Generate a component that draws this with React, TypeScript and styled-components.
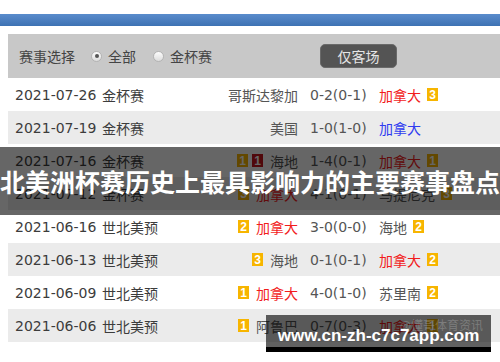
import React from "react";
import styled, { createGlobalStyle } from "styled-components";

type Tone = "red" | "blue" | "plain";
type Card = { n: number; red?: boolean };

interface Match {
  date: string;
  comp: string;
  home: string;
  homeTone: Tone;
  homeCards: Card[];
  score: string;
  away: string;
  awayTone: Tone;
  awayCards: Card[];
}

const matches: Match[] = [
  { date: "2021-07-26", comp: "金杯赛", home: "哥斯达黎加", homeTone: "plain", homeCards: [], score: "0-2(0-1)", away: "加拿大", awayTone: "red", awayCards: [{ n: 3 }] },
  { date: "2021-07-19", comp: "金杯赛", home: "美国", homeTone: "plain", homeCards: [], score: "1-0(1-0)", away: "加拿大", awayTone: "blue", awayCards: [] },
  { date: "2021-07-16", comp: "金杯赛", home: "海地", homeTone: "plain", homeCards: [{ n: 1 }, { n: 1, red: true }], score: "1-4(0-1)", away: "加拿大", awayTone: "red", awayCards: [{ n: 1 }] },
  { date: "2021-07-12", comp: "金杯赛", home: "加拿大", homeTone: "red", homeCards: [{ n: 3 }], score: "4-1(0-1)", away: "马提尼克", awayTone: "plain", awayCards: [{ n: 3 }] },
  { date: "2021-06-16", comp: "世北美预", home: "加拿大", homeTone: "red", homeCards: [{ n: 2 }], score: "3-0(0-0)", away: "海地", awayTone: "plain", awayCards: [{ n: 2 }] },
  { date: "2021-06-13", comp: "世北美预", home: "海地", homeTone: "plain", homeCards: [{ n: 3 }], score: "0-1(0-1)", away: "加拿大", awayTone: "red", awayCards: [{ n: 2 }] },
  { date: "2021-06-09", comp: "世北美预", home: "加拿大", homeTone: "red", homeCards: [{ n: 1 }], score: "4-0(1-0)", away: "苏里南", awayTone: "plain", awayCards: [{ n: 2 }] },
  { date: "2021-06-06", comp: "世北美预", home: "阿鲁巴", homeTone: "plain", homeCards: [{ n: 1 }], score: "0-7(0-3)", away: "加拿大", awayTone: "red", awayCards: [{ n: 1 }] },
];

const GlobalStyle = createGlobalStyle`
  body {
    margin: 0;
    background: #fff;
    font-family: "DejaVu Sans", "Noto Sans CJK SC", sans-serif;
  }
`;

const App = () => {
  return (
    <Page>
      <GlobalStyle />
      <TopBar />
      <Board>
        <Header>
          <FilterLabel>赛事选择</FilterLabel>
          <RadioItem>
            <Radio checked />
            全部
          </RadioItem>
          <RadioItem>
            <Radio />
            金杯赛
          </RadioItem>
          <AwayButton>仅客场</AwayButton>
        </Header>

        {matches.map((m, idx) => (
          <Row key={idx} striped={idx % 2 === 1}>
            <DateCell>{m.date}</DateCell>
            <CompCell>{m.comp}</CompCell>
            <HomeCell>
              {m.homeCards.map((c, i) => (
                <Badge key={i} red={c.red}>
                  {c.n}
                </Badge>
              ))}
              <Team tone={m.homeTone}>{m.home}</Team>
            </HomeCell>
            <ScoreCell>{m.score}</ScoreCell>
            <AwayCell>
              <Team tone={m.awayTone}>{m.away}</Team>
              {m.awayCards.map((c, i) => (
                <Badge key={i} red={c.red}>
                  {c.n}
                </Badge>
              ))}
            </AwayCell>
          </Row>
        ))}
      </Board>

      <TitleBand>北美洲杯赛历史上最具影响力的主要赛事盘点</TitleBand>

      <Watermark>
        <WatermarkFaint>@懂哥体育资讯</WatermarkFaint>
        <WatermarkText>www.cn-zh-c7c7app.com</WatermarkText>
      </Watermark>
    </Page>
  );
};

export default App;

const Page = styled.div`
  position: relative;
  width: 500px;
  height: 362px;
  overflow: hidden;
`;

const TopBar = styled.div`
  margin-top: 14px;
  height: 12px;
  background: linear-gradient(#5a8ccc, #3d72b3);
`;

const Board = styled.div`
  margin: 8px 0 0 8px;
`;

const Header = styled.div`
  display: flex;
  align-items: center;
  height: 44px;
  padding-left: 11px;
  background: #c8c8c8;
  color: #444;
  font-size: 14px;
`;

const FilterLabel = styled.span`
  margin-right: 16px;
`;

const RadioItem = styled.label`
  display: flex;
  align-items: center;
  gap: 6px;
  margin-right: 17px;
`;

const Radio = styled.span<{ checked?: boolean }>`
  position: relative;
  width: 11px;
  height: 11px;
  border-radius: 50%;
  border: 1px solid #b4b4b4;
  background: linear-gradient(#fdfdfd, #dcdcdc);
  box-sizing: border-box;

  &::after {
    content: "";
    display: ${({ checked }) => (checked ? "block" : "none")};
    position: absolute;
    left: 2.5px;
    top: 2.5px;
    width: 4px;
    height: 4px;
    border-radius: 50%;
    background: #555;
  }
`;

const AwayButton = styled.button`
  margin-left: 91px;
  width: 77px;
  height: 24px;
  border: 1px solid #6a6a6a;
  border-radius: 5px;
  background: #545454;
  color: #e6e6e6;
  font-family: "Noto Sans CJK SC", sans-serif;
  font-size: 14px;
  padding: 0;
`;

const Row = styled.div<{ striped: boolean }>`
  display: grid;
  grid-template-columns: 87px 98px 98px 78px 1fr;
  align-items: center;
  height: 33px;
  padding-left: 7px;
  background: ${({ striped }) => (striped ? "#ebebeb" : "#fff")};
  color: #3c3c3c;
  font-size: 14px;
  white-space: nowrap;
`;

const DateCell = styled.span``;

const CompCell = styled.span``;

const HomeCell = styled.span`
  display: flex;
  align-items: center;
  justify-content: flex-end;
  gap: 4px;
`;

const ScoreCell = styled.span`
  padding-left: 12px;
  color: #555;
`;

const AwayCell = styled.span`
  display: flex;
  align-items: center;
  gap: 6px;
`;

const toneColor: Record<Tone, string> = {
  red: "#f21c1c",
  blue: "#2f3cf0",
  plain: "#555",
};

const Team = styled.span<{ tone: Tone }>`
  color: ${({ tone }) => toneColor[tone]};
  margin: 0 0 0 3px;
`;

const Badge = styled.span<{ red?: boolean }>`
  display: inline-flex;
  align-items: center;
  justify-content: center;
  width: 11px;
  height: 13px;
  background: ${({ red }) => (red ? "#c8161d" : "#f7b500")};
  color: #fff;
  font-family: "Liberation Sans", sans-serif;
  font-weight: bold;
  font-size: 12px;
`;

const TitleBand = styled.div`
  position: absolute;
  top: 147px;
  left: 0;
  right: 0;
  height: 68px;
  display: flex;
  align-items: center;
  justify-content: center;
  background: rgba(0, 0, 0, 0.6);
  color: #fff;
  font-family: "Noto Sans CJK SC", sans-serif;
  font-weight: bold;
  font-size: 25px;
  white-space: nowrap;
`;

const Watermark = styled.div`
  position: absolute;
  left: 266px;
  top: 315px;
  width: 225px;
  height: 37px;
  box-sizing: border-box;
  border-bottom: 5px solid #000;
  background: rgba(0, 0, 0, 0.62);
  display: flex;
  flex-direction: column;
  align-items: center;
  justify-content: flex-end;
`;

const WatermarkFaint = styled.span`
  position: absolute;
  right: 8px;
  top: 1px;
  color: rgba(255, 255, 255, 0.22);
  font-family: "Noto Sans CJK SC", sans-serif;
  font-size: 12px;
`;

const WatermarkText = styled.span`
  color: #fff;
  font-family: "Liberation Sans", sans-serif;
  font-weight: bold;
  font-size: 17px;
  line-height: 20px;
  margin-bottom: 1px;
`;
